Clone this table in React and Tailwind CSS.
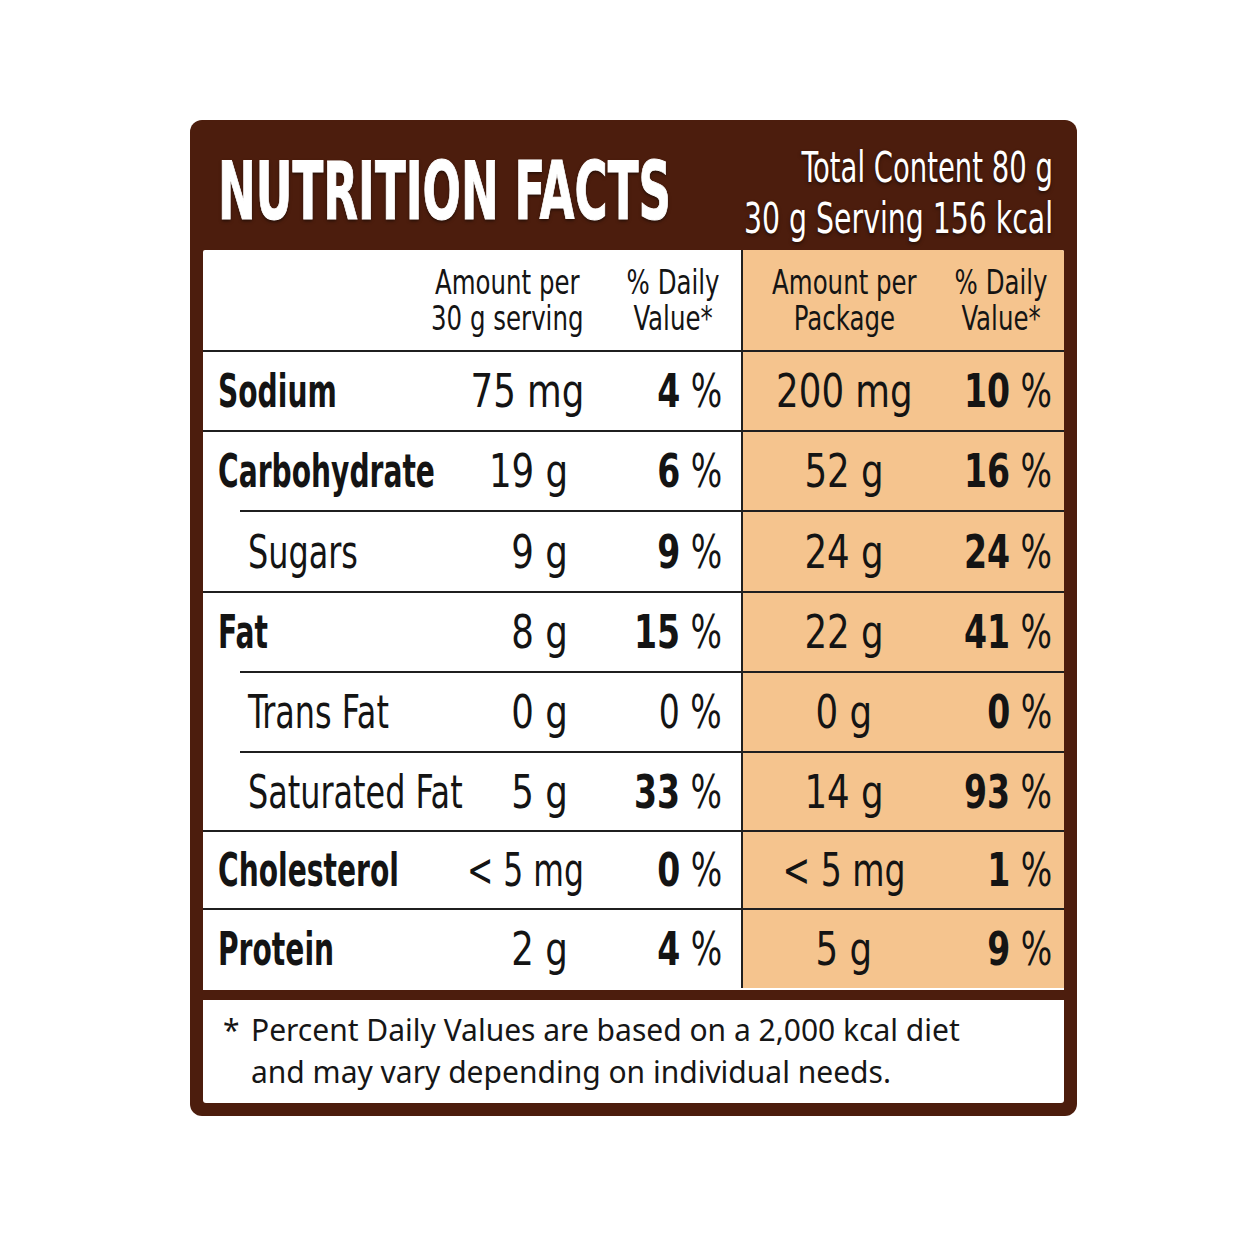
import React from "react";

const COND = "font-['DejaVu_Sans_Condensed','DejaVu_Sans',sans-serif]";

const rows = [
  { name: "Sodium", sub: false, a: "75 mg", ap: "pr-[16px]", p: "4", pb: true, pa: "200 mg", pp: "10", h: "h-[80px]" },
  { name: "Carbohydrate", sub: false, a: "19 g", ap: "pr-[32px]", p: "6", pb: true, pa: "52 g", pp: "16", h: "h-[80px]" },
  { name: "Sugars", sub: true, a: "9 g", ap: "pr-[32px]", p: "9", pb: true, pa: "24 g", pp: "24", h: "h-[81px]" },
  { name: "Fat", sub: false, a: "8 g", ap: "pr-[32px]", p: "15", pb: true, pa: "22 g", pp: "41", h: "h-[80px]" },
  { name: "Trans Fat", sub: true, a: "0 g", ap: "pr-[32px]", p: "0", pb: false, pa: "0 g", pp: "0", h: "h-[80px]" },
  { name: "Saturated Fat", sub: true, a: "5 g", ap: "pr-[32px]", p: "33", pb: true, pa: "14 g", pp: "93", h: "h-[79px]" },
  { name: "Cholesterol", sub: false, a: "< 5 mg", ap: "pr-[16px]", p: "0", pb: true, pa: "< 5 mg", pp: "1", h: "h-[78px]", lt: true },
  { name: "Protein", sub: false, a: "2 g", ap: "pr-[32px]", p: "4", pb: true, pa: "5 g", pp: "9", h: "h-[80px]" },
];

function Pct({ n, bold }) {
  return (
    <span className="inline-block origin-right scale-x-[0.8] whitespace-nowrap">
      <span className={bold ? "font-bold" : "font-normal"}>{n}</span>
      <span className="font-normal"> %</span>
    </span>
  );
}

function Row({ r }) {
  return (
    <div className={`flex flex-col ${r.h}`}>
      <div className={`h-[2px] bg-[#1f1f1f] ${r.sub ? "ml-[37px]" : ""}`} />
      <div className="grid flex-1 grid-cols-[227px_170px_141px_204px_119px] text-[46px] leading-[46px] text-[#141414]">
        <div className={`flex items-center whitespace-nowrap ${r.sub ? "pl-[45px]" : "pl-[15px]"}`}>
          <span
            className={`inline-block origin-left ${
              r.sub ? "font-normal scale-x-[0.77]" : "font-bold scale-x-[0.68]"
            }`}
          >
            {r.name}
          </span>
        </div>
        <div className={`flex items-center justify-end whitespace-nowrap ${r.ap}`}>
          <span className={`inline-block origin-right ${r.lt ? "scale-x-[0.76]" : "scale-x-[0.86]"}`}>{r.a}</span>
        </div>
        <div className="flex items-center justify-end whitespace-nowrap pr-[19px]">
          <Pct n={r.p} bold={r.pb} />
        </div>
        <div className="flex items-center justify-center whitespace-nowrap border-l-2 border-[#1f1f1f] bg-[#f5c48e]">
          <span className={`inline-block origin-center ${r.lt ? "scale-x-[0.8]" : "scale-x-[0.86]"}`}>{r.pa}</span>
        </div>
        <div className="flex items-center justify-end whitespace-nowrap bg-[#f5c48e] pr-[12px]">
          <Pct n={r.pp} bold={true} />
        </div>
      </div>
    </div>
  );
}

function HeadCell({ a, b, cls }) {
  return (
    <div className={`flex items-center justify-center whitespace-nowrap text-center ${cls}`}>
      <span className="inline-flex origin-center scale-x-[0.8] flex-col items-center">
        <span>{a}</span>
        <span>{b}</span>
      </span>
    </div>
  );
}

export default function App() {
  return (
    <div className="h-[1254px] w-[1254px] bg-white pl-[190px] pt-[120px]">
      <div className={`flex h-[996px] w-[887px] flex-col rounded-[12px] bg-[#4c1d0d] px-[13px] pb-[13px] ${COND}`}>
        {/* Header */}
        <div className="flex h-[130px] items-start justify-between pl-[15px] pr-[11px]">
          <div className="mt-[31px] min-w-0 flex-1 whitespace-nowrap">
            <span className="inline-block origin-left scale-x-[0.62] text-[81px] font-bold leading-[81px] text-white [-webkit-text-stroke:1px_white] [text-shadow:0_2px_4px_rgba(0,0,0,0.55)]">
              NUTRITION FACTS
            </span>
          </div>
          <div className="mt-[22px] flex w-[320px] shrink-0 flex-col items-end text-[42px] leading-[51px] text-white [text-shadow:0_2px_4px_rgba(0,0,0,0.5)]">
            <span className="inline-block origin-right scale-x-[0.727] whitespace-nowrap">Total Content 80 g</span>
            <span className="inline-block origin-right scale-x-[0.75] whitespace-nowrap">30 g Serving 156 kcal</span>
          </div>
        </div>

        {/* Table */}
        <div className="flex h-[740px] flex-col overflow-hidden rounded-t-[2px] bg-white">
          <div className="grid h-[100px] grid-cols-[227px_170px_141px_204px_119px] text-[34px] leading-[36px] text-[#141414]">
            <div />
            <HeadCell a="Amount per" b="30 g serving" cls="pr-[16px]" />
            <HeadCell a="% Daily" b="Value*" cls="pl-[6px]" />
            <HeadCell a="Amount per" b="Package" cls="border-l-2 border-[#1f1f1f] bg-[#f5c48e]" />
            <HeadCell a="% Daily" b="Value*" cls="bg-[#f5c48e] pr-[6px]" />
          </div>
          {rows.map((r) => (
            <Row key={r.name} r={r} />
          ))}
        </div>

        <div className="h-[10px]" />

        {/* Footer */}
        <div className="flex h-[103px] rounded-b-[3px] bg-white pl-[20px] pt-[9px] font-['Noto_Sans',sans-serif] text-[30px] leading-[42px] text-[#161616]">
          <span className="w-[28px] shrink-0">*</span>
          <div className="flex flex-col whitespace-nowrap">
            <span>Percent Daily Values are based on a 2,000 kcal diet</span>
            <span>and may vary depending on individual needs.</span>
          </div>
        </div>
      </div>
    </div>
  );
}
